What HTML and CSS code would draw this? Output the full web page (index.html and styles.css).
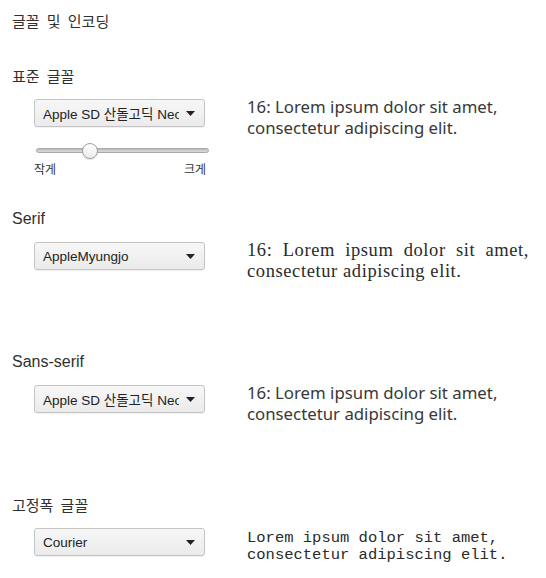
FILE: index.html
```html
<!DOCTYPE html>
<html lang="ko">
<head>
<meta charset="UTF-8">
<title>글꼴 및 인코딩</title>
<link rel="stylesheet" href="styles.css">
</head>
<body>

<div id="page">

<div class="title ko">글꼴 및 인코딩</div>

<div class="section">
<div class="label ko">표준 글꼴</div>
<div class="row">
<div class="controls">
<div class="select"><span class="selecttext">Apple SD 산돌고딕 Neo</span><svg class="arrow" width="9" height="5" viewBox="0 0 9 5"><path d="M0 0H9L4.5 5Z"/></svg></div>
<div class="slider"><div class="track"></div><div class="thumb"></div></div>
<div class="ticks ko"><span>작게</span><span>크게</span></div>
</div><!-- controls -->
<div class="sample sans"><div>16: Lorem ipsum dolor sit amet,</div><div>consectetur adipiscing elit.</div></div>
</div><!-- row -->
</div><!-- section -->

<div class="section">
<div class="label">Serif</div>
<div class="row">
<div class="controls">
<div class="select"><span class="selecttext">AppleMyungjo</span><svg class="arrow" width="9" height="5" viewBox="0 0 9 5"><path d="M0 0H9L4.5 5Z"/></svg></div>
</div><!-- controls -->
<div class="sample serif"><div class="firstline">16: Lorem ipsum dolor sit amet,</div><div>consectetur adipiscing elit.</div></div>
</div><!-- row -->
</div><!-- section -->

<div class="section">
<div class="label">Sans-serif</div>
<div class="row">
<div class="controls">
<div class="select"><span class="selecttext">Apple SD 산돌고딕 Neo</span><svg class="arrow" width="9" height="5" viewBox="0 0 9 5"><path d="M0 0H9L4.5 5Z"/></svg></div>
</div><!-- controls -->
<div class="sample sans"><div>16: Lorem ipsum dolor sit amet,</div><div>consectetur adipiscing elit.</div></div>
</div><!-- row -->
</div><!-- section -->

<div class="section">
<div class="label ko">고정폭 글꼴</div>
<div class="row">
<div class="controls">
<div class="select"><span class="selecttext">Courier</span><svg class="arrow" width="9" height="5" viewBox="0 0 9 5"><path d="M0 0H9L4.5 5Z"/></svg></div>
</div><!-- controls -->
<div class="sample mono"><div>Lorem ipsum dolor sit amet,</div><div>consectetur adipiscing elit.</div></div>
</div><!-- row -->
</div><!-- section -->

</div><!-- page -->

</body>
</html>
```

FILE: styles.css
```css
body {
padding: 0;
margin: 0;
background-color: #fff;
color: #303030;
font-family: "Liberation Sans", "Noto Sans CJK KR", sans-serif;
}
#page {
padding: 11px 0 0 12px;
}
.ko {
font-family: "Noto Sans CJK KR", "Liberation Sans", sans-serif;
word-spacing: 3px;
}
.title {
font-size: 15px;
line-height: 20px;
margin-bottom: 35px;
}
.section {
min-height: 143px;
}
.section:last-child {
min-height: 0;
}
.label {
font-size: 16px;
line-height: 20px;
}
.label.ko {
font-size: 15px;
}
.row {
display: flex;
align-items: flex-start;
margin-top: 13px;
}
.controls {
width: 172px;
margin-left: 22px;
margin-right: 41px;
}
.select {
box-sizing: border-box;
display: flex;
align-items: center;
width: 171px;
height: 28px;
padding: 0 9px 0 8px;
border: 1px solid #c4c4c4;
border-radius: 3px;
background: linear-gradient(#f7f7f7, #ebebeb);
box-shadow: 0 1px 1px rgba(0, 0, 0, 0.06);
color: #222;
font-size: 13.5px;
}
.selecttext {
flex: 1;
overflow: hidden;
white-space: nowrap;
margin-right: 7px;
}
.arrow {
fill: #222;
}
.slider {
position: relative;
height: 16px;
margin: 16px 0 0 2px;
}
.track {
position: absolute;
left: 0;
right: -3px;
top: 5px;
height: 5px;
box-sizing: border-box;
border: 1px solid #a9a9a9;
border-radius: 3px;
background: linear-gradient(#b9b9b9, #dcdcdc);
}
.thumb {
position: absolute;
left: 46px;
top: 0;
width: 16px;
height: 16px;
box-sizing: border-box;
border: 1px solid #9f9f9f;
border-radius: 50%;
background: linear-gradient(#ffffff, #ececec);
box-shadow: 0 1px 1px rgba(0, 0, 0, 0.12);
}
.ticks {
display: flex;
justify-content: space-between;
font-size: 12px;
line-height: 16px;
margin-top: 2px;
color: #333;
}
.sample {
color: #2a2a2a;
white-space: nowrap;
}
.sans {
font-family: "Noto Sans", "Liberation Sans", sans-serif;
font-size: 16.8px;
line-height: 21px;
margin-top: -3px;
color: #383838;
}
.serif {
font-family: "Liberation Serif", serif;
font-size: 18.5px;
line-height: 21px;
letter-spacing: 0.6px;
margin-top: -2px;
}
.firstline {
word-spacing: 5px;
}
.mono {
font-family: "Liberation Mono", monospace;
font-size: 15.5px;
line-height: 17px;
margin-top: 2px;
}
```
